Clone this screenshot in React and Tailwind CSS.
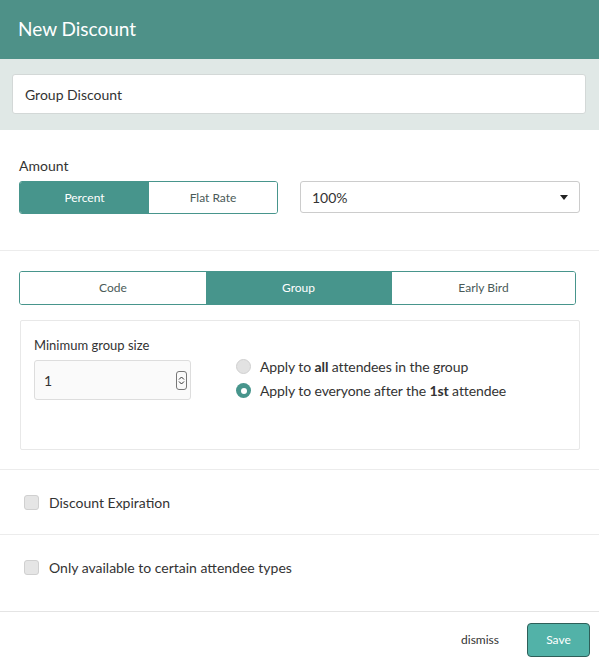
import React from "react";

export default function App() {
  return (
    <div className="w-[599px] h-[668px] bg-white overflow-hidden text-[#333]" style={{ fontFamily: "Lato, 'Open Sans', sans-serif" }}>
      <div className="h-[59px] bg-[#4e9188] flex items-center px-[18px] pb-[3px]">
        <h1 className="text-white text-[19px] leading-none">New Discount</h1>
      </div>
      <div className="bg-[#e0e8e6] h-[71px] pt-[15px] px-[12px]">
        <div className="h-[40px] w-[574px] bg-white border border-[#d3d8d7] rounded-[3px] flex items-center px-[12px] text-[14px] text-[#333]">
          Group Discount
        </div>
      </div>
      <div className="h-[121px] border-b border-[#ececec] px-[19px] pt-[28px]">
        <div className="text-[14px] leading-[16px] mb-[7px] text-[#333]">Amount</div>
        <div className="flex items-start gap-[22px]">
          <div className="flex w-[259px] h-[33px] border border-[#47958c] rounded-[3px] overflow-hidden text-[12px]">
            <div className="w-[129px] bg-[#47958c] text-white flex items-center justify-center">Percent</div>
            <div className="flex-1 bg-white text-[#4a5a58] flex items-center justify-center">Flat Rate</div>
          </div>
          <div className="w-[280px] h-[32px] border border-[#ccc] rounded-[3px] flex items-center justify-between px-[11px] text-[14px]">
            <span>100%</span>
            <svg width="8" height="5" viewBox="0 0 8 5"><path d="M0 0 L8 0 L4 5 Z" fill="#222" /></svg>
          </div>
        </div>
      </div>
      <div className="h-[219px] border-b border-[#ececec] px-[19px] pt-[20px]">
        <div className="flex w-[557px] h-[34px] border border-[#47958c] rounded-[3px] overflow-hidden text-[12px]">
          <div className="w-[186px] bg-white text-[#4a5a58] flex items-center justify-center">Code</div>
          <div className="w-[185px] bg-[#47958c] text-white flex items-center justify-center">Group</div>
          <div className="flex-1 bg-white text-[#4a5a58] flex items-center justify-center border-l border-[#47958c]">Early Bird</div>
        </div>
        <div className="mt-[15px] ml-[1px] w-[560px] h-[130px] border border-[#e8e8e8] rounded-[2px] px-[13px] pt-[16px] flex">
          <div className="w-[157px]">
            <div className="text-[13px] leading-[16px] text-[#333]">Minimum group size</div>
            <div className="mt-[7px] h-[40px] border border-[#ddd] rounded-[3px] bg-[#fafafa] flex items-center justify-between pl-[9px] pr-[3px] text-[14px]">
              <span>1</span>
              <div className="w-[11px] h-[19px] border border-[#777] rounded-[3px] flex flex-col items-center justify-center gap-[1px]">
                <svg width="7" height="4" viewBox="0 0 7 4"><path d="M1 3.5 L3.5 1 L6 3.5" stroke="#333" fill="none" strokeWidth="1" /></svg>
                <svg width="7" height="4" viewBox="0 0 7 4"><path d="M1 0.5 L3.5 3 L6 0.5" stroke="#333" fill="none" strokeWidth="1" /></svg>
              </div>
            </div>
          </div>
          <div className="ml-[45px] pt-[21px] flex flex-col gap-[7px] text-[14px] leading-[17px] text-[#333] tracking-[-0.1px]">
            <div className="flex items-center gap-[9px]">
              <span className="w-[15px] h-[15px] rounded-full bg-[#e2e2e2] border border-[#d0d0d0]"></span>
              <span>Apply to <b className="font-bold">all</b> attendees in the group</span>
            </div>
            <div className="flex items-center gap-[9px]">
              <span className="w-[15px] h-[15px] rounded-full bg-[#47958c] flex items-center justify-center">
                <span className="w-[6px] h-[6px] rounded-full bg-white"></span>
              </span>
              <span>Apply to everyone after the <b className="font-bold">1st</b> attendee</span>
            </div>
          </div>
        </div>
      </div>
      <div className="h-[65px] border-b border-[#ececec] flex items-center px-[24px] gap-[10px] text-[14px]">
        <span className="w-[15px] h-[15px] rounded-[3px] bg-[#e5e5e5] border border-[#d0d0d0]"></span>
        <span>Discount Expiration</span>
      </div>
      <div className="h-[77px] border-b border-[#e4e4e4] flex items-center px-[24px] gap-[10px] text-[14px] pb-[11px]">
        <span className="w-[15px] h-[15px] rounded-[3px] bg-[#e5e5e5] border border-[#d0d0d0]"></span>
        <span>Only available to certain attendee types</span>
      </div>
      <div className="flex items-center justify-end pr-[9px] pt-[11px] gap-[28px]">
        <span className="text-[12px] text-[#333]">dismiss</span>
        <div className="w-[63px] h-[34px] rounded-[4px] bg-[#52b2a8] border border-[#2e5f59] text-white text-[12px] flex items-center justify-center">Save</div>
      </div>
    </div>
  );
}
